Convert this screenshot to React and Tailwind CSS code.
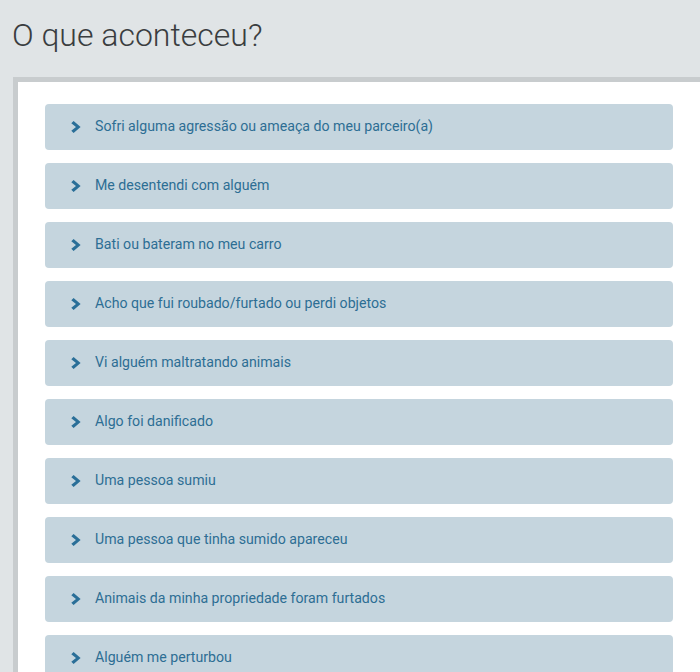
const ITEMS = [
  'Sofri alguma agressão ou ameaça do meu parceiro(a)',
  'Me desentendi com alguém',
  'Bati ou bateram no meu carro',
  'Acho que fui roubado/furtado ou perdi objetos',
  'Vi alguém maltratando animais',
  'Algo foi danificado',
  'Uma pessoa sumiu',
  'Uma pessoa que tinha sumido apareceu',
  'Animais da minha propriedade foram furtados',
  'Alguém me perturbou',
]

function Chevron() {
  return (
    <svg viewBox="0 0 10 12" className="w-[10px] h-[12px] shrink-0" fill="#2a6f98">
      <path d="M0.3 2.2 L2.6 0 L9.6 6 L2.6 12 L0.3 9.8 L5 6 Z" />
    </svg>
  )
}

export default function App() {
  return (
    <div className="h-[672px] overflow-hidden bg-[#e0e4e6] font-['Roboto',sans-serif]">
      <h1 className="pl-[12px] pt-[15px] h-[77px] text-[32px] font-light text-[#3a3d40] leading-[40px]">
        O que aconteceu?
      </h1>
      <div className="ml-[13px] bg-white border-t-[5px] border-l-[5px] border-[#c8ccce] h-full pt-[22px] pl-[27px] pr-[27px]">
        <div className="flex flex-col gap-[13px]">
          {ITEMS.map(item => (
            <button
              key={item}
              className="flex items-center gap-[14px] h-[46px] pl-[26px] rounded-[4px] bg-[#c5d5de] text-left text-[14.15px] text-[#2d6e94]"
            >
              <Chevron />
              <span>{item}</span>
            </button>
          ))}
        </div>
      </div>
    </div>
  )
}
